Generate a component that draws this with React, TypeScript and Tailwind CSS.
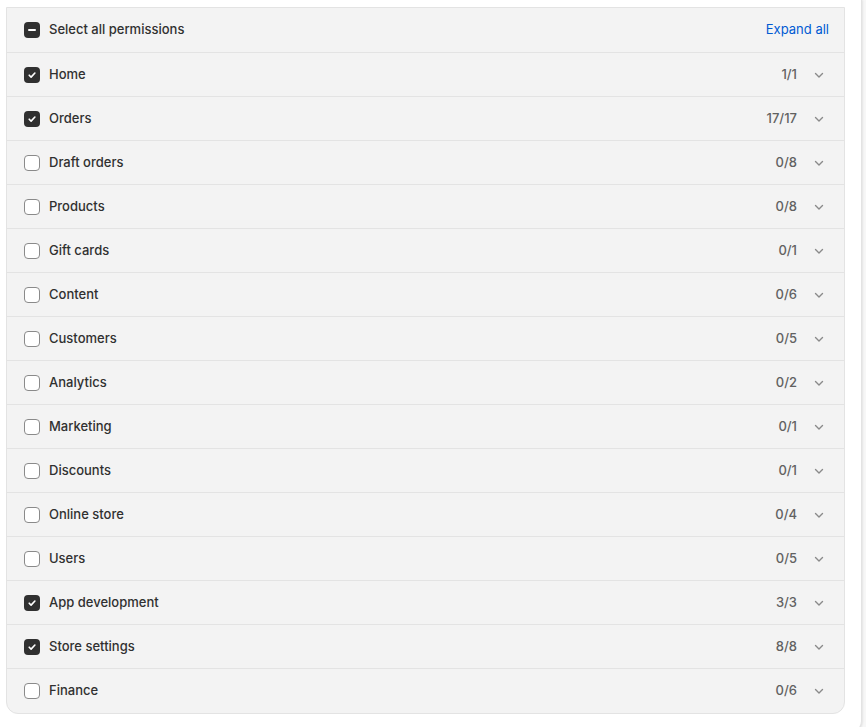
const rows: { label: string; count: string; checked: boolean }[] = [
  { label: 'Home', count: '1/1', checked: true },
  { label: 'Orders', count: '17/17', checked: true },
  { label: 'Draft orders', count: '0/8', checked: false },
  { label: 'Products', count: '0/8', checked: false },
  { label: 'Gift cards', count: '0/1', checked: false },
  { label: 'Content', count: '0/6', checked: false },
  { label: 'Customers', count: '0/5', checked: false },
  { label: 'Analytics', count: '0/2', checked: false },
  { label: 'Marketing', count: '0/1', checked: false },
  { label: 'Discounts', count: '0/1', checked: false },
  { label: 'Online store', count: '0/4', checked: false },
  { label: 'Users', count: '0/5', checked: false },
  { label: 'App development', count: '3/3', checked: true },
  { label: 'Store settings', count: '8/8', checked: true },
  { label: 'Finance', count: '0/6', checked: false },
];

function Box({ state }: { state: 'on' | 'off' | 'mixed' }) {
  if (state === 'off') {
    return <span className="w-4 h-4 shrink-0 rounded-[4px] border border-[#8a8a8a] bg-white" />;
  }
  return (
    <span className="w-4 h-4 shrink-0 rounded-[4px] bg-[#303030] flex items-center justify-center">
      {state === 'on' ? (
        <svg width="10" height="10" viewBox="0 0 10 10" fill="none">
          <path d="M2.2 5.2l1.9 1.9 3.8-4.1" stroke="white" strokeWidth="1.6" strokeLinecap="round" strokeLinejoin="round" />
        </svg>
      ) : (
        <span className="w-2 h-[2px] rounded-full bg-white" />
      )}
    </span>
  );
}

function Chevron() {
  return (
    <span className="w-5 flex justify-center">
      <svg width="12" height="12" viewBox="0 0 12 12" fill="none">
        <path d="M2.5 4.5L6 8l3.5-3.5" stroke="#8a8a8a" strokeWidth="1.4" strokeLinecap="round" strokeLinejoin="round" />
      </svg>
    </span>
  );
}

export default function App() {
  return (
    <div className="w-[866px] h-[727px] overflow-hidden bg-[#f7f7f7] font-['Inter',sans-serif] text-[13px]">
      <div className="w-[862px] h-[733px] bg-white rounded-br-xl border-r border-b border-[#e3e3e3] shadow-[1px_0_2px_rgba(0,0,0,0.08)] pl-[6px] pr-[16px] pt-[7px]">
        <div className="border border-[#e3e3e3] rounded-b-xl bg-[#f3f3f3]">
          {/* header */}
          <div className="h-[45px] flex items-center pl-[17px] pr-[15px] border-b border-[#e3e3e3]">
            <Box state="mixed" />
            <span className="ml-[9px] font-[550] text-[#303030]">Select all permissions</span>
            <span className="ml-auto text-[#005bd3]">Expand all</span>
          </div>
          {rows.map((r, i) => (
            <div
              key={r.label}
              className={`h-11 flex items-center pl-[17px] pr-[15px] ${i < rows.length - 1 ? 'border-b border-[#e3e3e3]' : ''}`}
            >
              <Box state={r.checked ? 'on' : 'off'} />
              <span className="ml-[9px] font-[550] text-[#303030]">{r.label}</span>
              <span className="ml-auto text-[#616161] font-[450]">{r.count}</span>
              <span className="ml-3">
                <Chevron />
              </span>
            </div>
          ))}
        </div>
      </div>
    </div>
  );
}
